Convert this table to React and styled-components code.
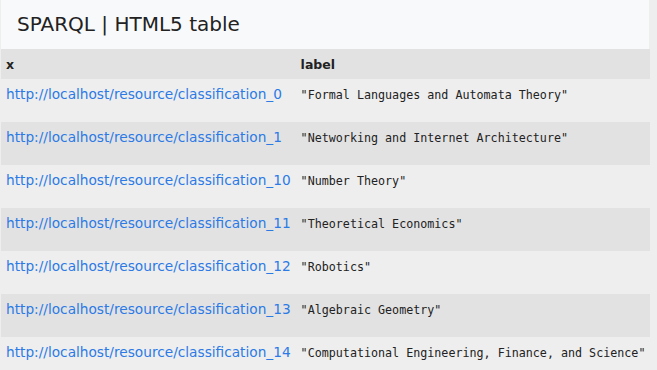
import styled, { createGlobalStyle } from 'styled-components';

const GlobalStyle = createGlobalStyle`
  html, body {
    margin: 0;
    padding: 0;
    background: #eeeeee;
  }
  body {
    font-family: "DejaVu Sans", Verdana, sans-serif;
  }
`;

const Page = styled.div`
  padding: 0 8px 0 1px;
  overflow: hidden;
  height: 370px;
`;

const TitleBar = styled.header`
  background: #f8f9fa;
  height: 49px;
  display: flex;
  align-items: center;
  padding-left: 16px;
`;

const Title = styled.h1`
  margin: 0 0 2px;
  font-size: 20px;
  font-weight: normal;
  color: #222;
`;

const Table = styled.table`
  width: 100%;
  border-collapse: collapse;
`;

const HeadCell = styled.th`
  background: #e2e2e2;
  height: 30px;
  padding: 0 5px;
  text-align: left;
  font-size: 12.5px;
  font-weight: bold;
  color: #222;
`;

const Row = styled.tr`
  background: ${(p) => (p.$odd ? '#e2e2e2' : '#eeeeee')};
`;

const Cell = styled.td`
  height: 43px;
  box-sizing: border-box;
  padding: 5px 5px 0;
  vertical-align: top;
  white-space: nowrap;
`;

const Link = styled.a`
  color: #2b7ae6;
  text-decoration: none;
  font-size: 13.7px;
  line-height: 18px;
`;

const Literal = styled.span`
  font-family: "DejaVu Sans Mono", "Liberation Mono", monospace;
  font-size: 11.7px;
  color: #222;
  line-height: 18px;
`;

const rows = [
  ['0', 'Formal Languages and Automata Theory'],
  ['1', 'Networking and Internet Architecture'],
  ['10', 'Number Theory'],
  ['11', 'Theoretical Economics'],
  ['12', 'Robotics'],
  ['13', 'Algebraic Geometry'],
  ['14', 'Computational Engineering, Finance, and Science'],
];

export default function App() {
  return (
    <Page>
      <GlobalStyle />
      <TitleBar>
        <Title>SPARQL | HTML5 table</Title>
      </TitleBar>
      <Table>
        <thead>
          <tr>
            <HeadCell>x</HeadCell>
            <HeadCell>label</HeadCell>
          </tr>
        </thead>
        <tbody>
          {rows.map(([id, label], i) => (
            <Row key={id} $odd={i % 2 === 1}>
              <Cell>
                <Link href={`http://localhost/resource/classification_${id}`}>
                  http://localhost/resource/classification_{id}
                </Link>
              </Cell>
              <Cell style={{ width: '100%' }}>
                <Literal>"{label}"</Literal>
              </Cell>
            </Row>
          ))}
        </tbody>
      </Table>
    </Page>
  );
}
